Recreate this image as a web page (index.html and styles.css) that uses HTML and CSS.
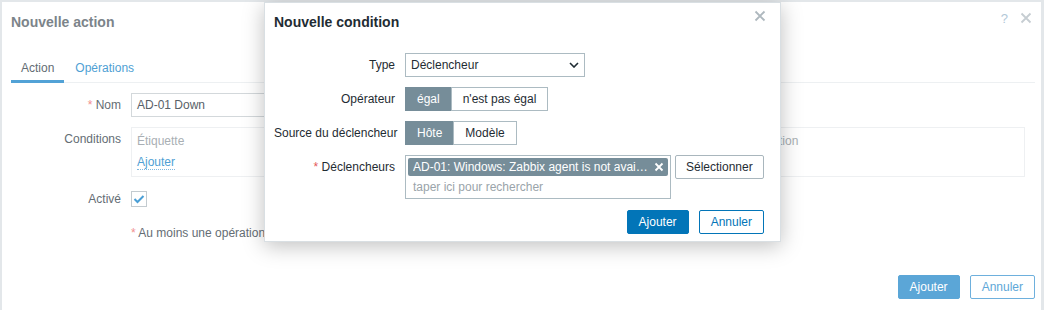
FILE: index.html
```html
<!DOCTYPE html>
<html lang="fr">
<head>
<meta charset="utf-8">
<title>Nouvelle action</title>
<link rel="stylesheet" href="styles.css">
</head>
<body>
<div class="screen">
  <div class="outer">
    <div class="outer-head">
      <h4 class="outer-title">Nouvelle action</h4>
      <div class="head-tools">
        <span class="help">?</span>
        <svg class="outer-close" width="12" height="12" viewBox="0 0 12 12"><path d="M1.5 1.5 L10.5 10.5 M10.5 1.5 L1.5 10.5" stroke="#c6cdd2" stroke-width="1.8" fill="none"/></svg>
      </div>
    </div>
    <div class="outer-body">
      <ul class="tabs">
        <li class="tab active">Action</li>
        <li class="tab link">Opérations</li>
      </ul>
      <div class="form">
        <label class="lbl"><span class="ast">*</span> Nom</label>
        <div class="field"><div class="input">AD-01 Down</div></div>

        <label class="lbl">Conditions</label>
        <div class="field">
          <div class="cond-box">
            <div class="cond-head"><span>Étiquette</span><span>Nom</span><span>Action</span></div>
            <div class="cond-add"><span class="dotted">Ajouter</span></div>
          </div>
        </div>

        <label class="lbl">Activé</label>
        <div class="field"><span class="checkbox"><svg width="12" height="10" viewBox="0 0 12 10"><path d="M1.5 5 L4.5 8 L10.5 2" stroke="#4a9fd6" stroke-width="2" fill="none"/></svg></span></div>

        <div></div>
        <p class="note"><span class="ast">*</span> Au moins une opération doit exister.</p>
      </div>
      <div class="outer-foot">
        <span class="obtn primary">Ajouter</span>
        <span class="obtn alt">Annuler</span>
      </div>
    </div>
  </div>

  <div class="dialog">
    <h4 class="dlg-title">Nouvelle condition</h4>
    <svg class="dlg-close" width="12" height="12" viewBox="0 0 12 12"><path d="M1.5 1.5 L10.5 10.5 M10.5 1.5 L1.5 10.5" stroke="#aeb8be" stroke-width="1.8" fill="none"/></svg>
    <div class="dform">
      <label class="dlbl">Type</label>
      <div class="dfield">
        <div class="select"><span>Déclencheur</span><svg width="10" height="6" viewBox="0 0 10 6"><path d="M1 1 L5 5 L9 1" stroke="#1f2c33" stroke-width="1.6" fill="none"/></svg></div>
      </div>

      <label class="dlbl">Opérateur</label>
      <div class="dfield">
        <div class="radio"><span class="ropt on">égal</span><span class="ropt">n'est pas égal</span></div>
      </div>

      <label class="dlbl">Source du déclencheur</label>
      <div class="dfield">
        <div class="radio"><span class="ropt on">Hôte</span><span class="ropt">Modèle</span></div>
      </div>

      <label class="dlbl"><span class="ast-d">*</span> Déclencheurs</label>
      <div class="dfield ms-row">
        <div class="multiselect">
          <div class="tag"><span class="tag-text">AD-01: Windows: Zabbix agent is not available (for 3m)</span><svg class="tag-x" width="10" height="10" viewBox="0 0 10 10"><path d="M1.5 1.5 L8.5 8.5 M8.5 1.5 L1.5 8.5" stroke="#ffffff" stroke-width="1.8" fill="none"/></svg></div>
          <div class="placeholder">taper ici pour rechercher</div>
        </div>
        <span class="btn grey">Sélectionner</span>
      </div>
    </div>
    <div class="dfoot">
      <span class="btn blue">Ajouter</span>
      <span class="btn outline">Annuler</span>
    </div>
  </div>
</div>
</body>
</html>
```
FILE: styles.css
```css
* { box-sizing: border-box; }
html, body { margin: 0; padding: 0; }
body {
  background: #e3e7ea;
  font-family: "Liberation Sans", Arial, sans-serif;
  font-size: 12px;
  width: 1044px;
  height: 310px;
  overflow: hidden;
}
.screen {
  position: relative;
  width: 1044px;
  height: 310px;
  overflow: hidden;
  padding: 2px 3px 0 2px;
}
.outer {
  background: #fff;
  height: 308px;
}
.outer-head {
  display: flex;
  justify-content: space-between;
  padding: 12px 9px 0 9px;
}
.outer-title {
  margin: 0;
  font-size: 14px;
  line-height: 16px;
  font-weight: bold;
  color: #7c848a;
}
.head-tools {
  display: flex;
  align-items: center;
  gap: 12px;
  height: 16px;
  margin-top: -4px;
}
.help { color: #b3c8d8; font-size: 13px; }
.outer-body { padding: 0 6px 0 9px; }
.tabs {
  list-style: none;
  margin: 25px 0 0 0;
  padding: 0;
  display: flex;
  border-bottom: 1px solid #edf0f2;
}
.tab {
  padding: 6px 10px 5px;
  line-height: 14px;
  border-bottom: 3px solid transparent;
  margin-bottom: -1px;
  color: #636c73;
}
.tab.active { border-bottom-color: #52a2d6; }
.tab.link { color: #4f9fd4; margin-left: 1px; }
.form {
  display: grid;
  grid-template-columns: 110px 1fr;
  column-gap: 10px;
  row-gap: 10px;
  margin-top: 10px;
}
.lbl {
  text-align: right;
  line-height: 24px;
  color: #646d74;
}
.ast { color: #f19090; }
.field { min-height: 24px; display: flex; align-items: center; }
.input {
  width: 453px;
  height: 24px;
  border: 1px solid #d3d8db;
  padding: 0 5px;
  line-height: 22px;
  color: #586168;
}
.cond-box {
  width: 894px;
  border: 1px solid #eef0f2;
  padding: 5px 5px 6px 5px;
}
.cond-head {
  display: grid;
  grid-template-columns: 300px 328px auto;
  line-height: 16px;
  color: #a9afb4;
}
.cond-add { margin-top: 5px; line-height: 16px; }
.dotted {
  color: #4f9fd4;
  border-bottom: 1px dotted #7fb8df;
}
.checkbox {
  width: 16px;
  height: 16px;
  border: 1px solid #c3cbd0;
  display: flex;
  align-items: center;
  justify-content: center;
}
.note {
  margin: 0;
  color: #646d74;
  line-height: 24px;
}
.outer-foot {
  display: flex;
  justify-content: flex-end;
  gap: 10px;
  margin-top: 30px;
}
.obtn {
  height: 24px;
  line-height: 22px;
  padding: 0 11px;
  border: 1px solid;
  border-radius: 2px;
}
.obtn.primary { background: #5ba6d7; border-color: #5ba6d7; color: #fff; }
.obtn.alt { background: #fff; border-color: #6eb0dd; color: #5ea7d8; }

/* inner dialog */
.dialog {
  position: absolute;
  left: 264px;
  top: 2px;
  width: 517px;
  height: 240px;
  background: #fff;
  border: 1px solid #d9dfe3;
  box-shadow: 0 4px 20px 0 rgba(0, 0, 0, 0.25);
  padding: 11px 16px 0 9px;
}
.dlg-title {
  margin: 0;
  font-size: 14px;
  line-height: 16px;
  font-weight: bold;
  color: #1f2c33;
}
.dlg-close {
  position: absolute;
  top: 7px;
  right: 14px;
}
.dform {
  display: grid;
  grid-template-columns: 121px 1fr;
  column-gap: 10px;
  row-gap: 10px;
  margin-top: 23px;
}
.dlbl {
  text-align: right;
  line-height: 24px;
  white-space: nowrap;
  color: #1f2c33;
}
.ast-d { color: #e45959; }
.dfield { display: flex; }
.select {
  width: 180px;
  height: 24px;
  border: 1px solid #acbbc2;
  padding: 0 5px;
  display: flex;
  justify-content: space-between;
  align-items: center;
  color: #1f2c33;
}
.radio { display: flex; height: 24px; }
.ropt {
  padding: 0 11px;
  border: 1px solid #acbbc2;
  line-height: 22px;
  color: #1f2c33;
  background: #fff;
}
.ropt + .ropt { margin-left: -1px; }
.ropt.on { background: #768d99; border-color: #768d99; color: #fff; }
.ms-row { gap: 4px; align-items: flex-start; }
.multiselect {
  width: 266px;
  height: 44px;
  border: 1px solid #acbbc2;
  padding: 2px 2px 0 2px;
}
.tag {
  height: 18px;
  background: #768d99;
  border-radius: 2px;
  color: #fff;
  display: flex;
  align-items: center;
  padding: 0 4px 0 5px;
}
.tag-text {
  flex: 1;
  white-space: nowrap;
  overflow: hidden;
  text-overflow: ellipsis;
  line-height: 18px;
  padding-right: 5px;
}
.tag-x { flex: none; }
.placeholder {
  color: #9aa4aa;
  line-height: 16px;
  margin-top: 3px;
  padding-left: 5px;
}
.btn {
  height: 24px;
  line-height: 22px;
  padding: 0 11px;
  border: 1px solid;
  border-radius: 2px;
  white-space: nowrap;
}
.btn.grey { background: #fff; border-color: #a9b6bd; color: #1f2c33; padding: 0 10px; }
.btn.blue { background: #0275b8; border-color: #0275b8; color: #fff; }
.btn.outline { background: #fff; border-color: #0275b8; color: #0275b8; }
.dfoot {
  display: flex;
  justify-content: flex-end;
  gap: 10px;
  margin-top: 11px;
}
```
